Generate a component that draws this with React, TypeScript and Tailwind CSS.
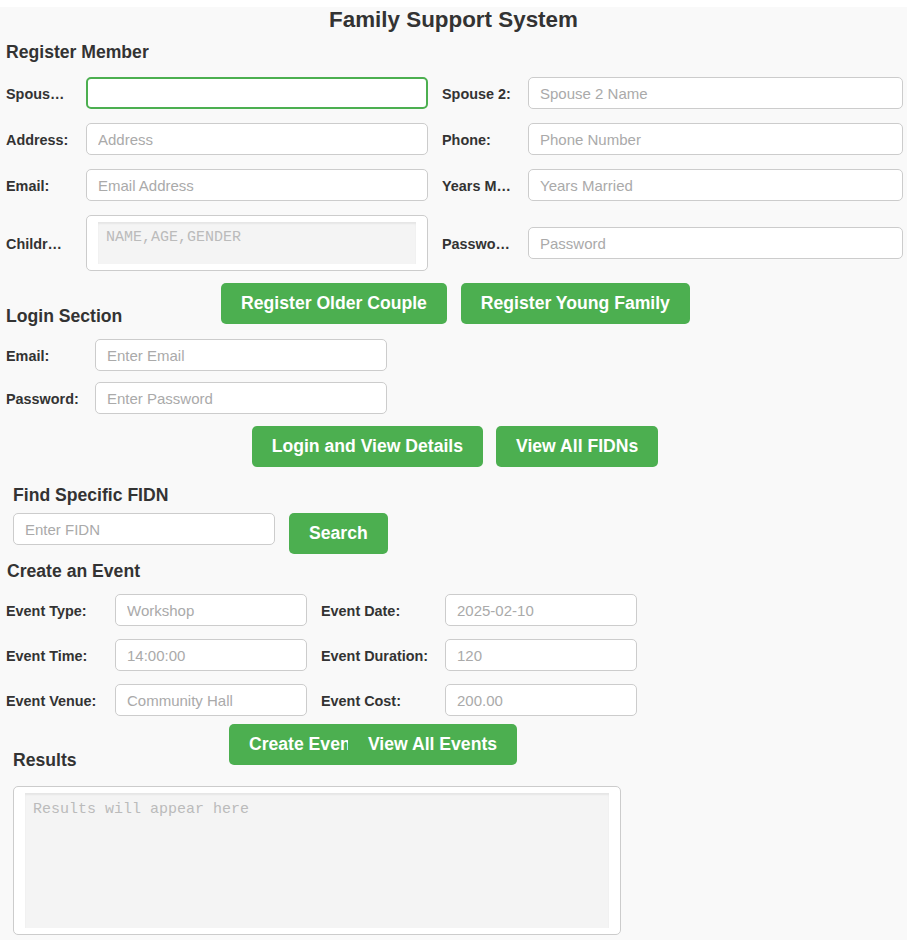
const sans = { fontFamily: '"Liberation Sans", Arial, sans-serif' }

const inputCls =
  "h-[32px] w-full rounded-[5px] border border-[#cccccc] bg-white px-[11px] text-[15px] text-[#333] placeholder:text-[#aaaaaa] outline-none"
const labelCls =
  "shrink-0 overflow-hidden text-ellipsis whitespace-nowrap pt-[3px] text-[14.4px] font-bold text-[#333]"
const btnCls =
  "h-[41px] shrink-0 whitespace-nowrap rounded-[5px] bg-[#4caf50] px-[20px] text-[17.6px] font-bold text-white"
const headCls = "text-[17.6px] font-bold leading-[20px] text-[#333]"
const monoCls =
  "block w-full resize-none bg-[#f4f4f4] px-[8px] text-[15px] text-[#333] placeholder:text-[#bbbbbb] shadow-[inset_0_2px_2px_rgba(0,0,0,0.06)] outline-none font-['Liberation_Mono',monospace]"

function Field({ label, placeholder, labelW, focused }: { label: string; placeholder?: string; labelW: string; focused?: boolean }) {
  return (
    <div className="flex items-center">
      <label className={`${labelCls} ${labelW} mr-[15px]`}>{label}</label>
      {focused ? (
        <input className="h-[32px] w-full rounded-[5px] border-2 border-[#4caf50] bg-white px-[10px] text-[15px] outline-none" />
      ) : (
        <input className={inputCls} placeholder={placeholder} />
      )}
    </div>
  )
}

function EventField({ label, placeholder }: { label: string; placeholder: string }) {
  return (
    <>
      <label className={labelCls}>{label}</label>
      <input className={`${inputCls} !w-[192px]`} placeholder={placeholder} />
    </>
  )
}

export default function App() {
  return (
    <div className="min-h-screen bg-[#f9f9f9] px-[6px] pb-[4px]" style={sans}>
      <h1 className="mt-[7px] text-center text-[22.4px] font-bold leading-[26px] text-[#333]">Family Support System</h1>

      {/* register */}
      <h2 className={`${headCls} mt-[9px]`}>Register Member</h2>
      <div className="mt-[15px] grid grid-cols-[422px_461px] gap-x-[14px] gap-y-[14px]">
        <Field label="Spouse 1:" labelW="w-[63px] mr-[17px]" focused />
        <Field label="Spouse 2:" placeholder="Spouse 2 Name" labelW="w-[71px]" />
        <Field label="Address:" placeholder="Address" labelW="w-[63px] mr-[17px]" />
        <Field label="Phone:" placeholder="Phone Number" labelW="w-[71px]" />
        <Field label="Email:" placeholder="Email Address" labelW="w-[63px] mr-[17px]" />
        <Field label="Years Married:" placeholder="Years Married" labelW="w-[71px]" />
        <div className="flex items-center">
          <label className={`${labelCls} mr-[17px] w-[63px]`}>Children:</label>
          <div className="w-full rounded-[5px] border border-[#cccccc] bg-white px-[11px] py-[6px]">
            <textarea className={`${monoCls} h-[42px] pt-[5px]`} placeholder="NAME,AGE,GENDER" />
          </div>
        </div>
        <Field label="Password:" placeholder="Password" labelW="w-[71px]" />
      </div>

      <div className="mt-[12px] grid grid-cols-[1fr_auto_1fr] items-start">
        <h2 className={`${headCls} mt-[23px]`}>Login Section</h2>
        <div className="flex gap-[14px] pl-[4px]">
          <button className={btnCls}>Register Older Couple</button>
          <button className={btnCls}>Register Young Family</button>
        </div>
        <div />
      </div>

      {/* login */}
      <div className="mt-[13px] flex w-[381px] flex-col gap-[11px]">
        <Field label="Email:" placeholder="Enter Email" labelW="w-[74px]" />
        <Field label="Password:" placeholder="Enter Password" labelW="w-[74px]" />
      </div>
      <div className="mt-[12px] flex justify-center gap-[13px] pl-[3px]">
        <button className={btnCls}>Login and View Details</button>
        <button className={btnCls}>View All FIDNs</button>
      </div>

      {/* find */}
      <div className="pl-[7px]">
        <h2 className={`${headCls} mt-[18px]`}>Find Specific FIDN</h2>
        <div className="mt-[8px] flex items-start gap-[14px]">
          <input className={`${inputCls} !w-[262px]`} placeholder="Enter FIDN" />
          <button className={`${btnCls} h-[40px]`}>Search</button>
        </div>
      </div>

      {/* event */}
      <div className="w-[734px]">
        <h2 className={`${headCls} mt-[7px] pl-px`}>Create an Event</h2>
        <div className="mt-[13px] grid grid-cols-[109px_206px_124px_193px] items-center gap-y-[13px]">
          <EventField label="Event Type:" placeholder="Workshop" />
          <EventField label="Event Date:" placeholder="2025-02-10" />
          <EventField label="Event Time:" placeholder="14:00:00" />
          <EventField label="Event Duration:" placeholder="120" />
          <EventField label="Event Venue:" placeholder="Community Hall" />
          <EventField label="Event Cost:" placeholder="200.00" />
        </div>
        <div className="mt-[8px] grid grid-cols-[1fr_auto_1fr] items-start">
          <h2 className={`${headCls} mt-[26px] pl-[7px]`}>Results</h2>
          <div className="flex">
            <button className={`${btnCls} w-[148px] overflow-hidden text-left`}>Create Event</button>
            <button className={`${btnCls} relative -ml-[29px]`}>View All Events</button>
          </div>
          <div />
        </div>
      </div>

      {/* results */}
      <div className="ml-[7px] mt-[16px] w-[608px] rounded-[5px] border border-[#cccccc] bg-white px-[11px] py-[6px]">
        <textarea className={`${monoCls} h-[135px] pt-[6px]`} placeholder="Results will appear here" />
      </div>
    </div>
  )
}
